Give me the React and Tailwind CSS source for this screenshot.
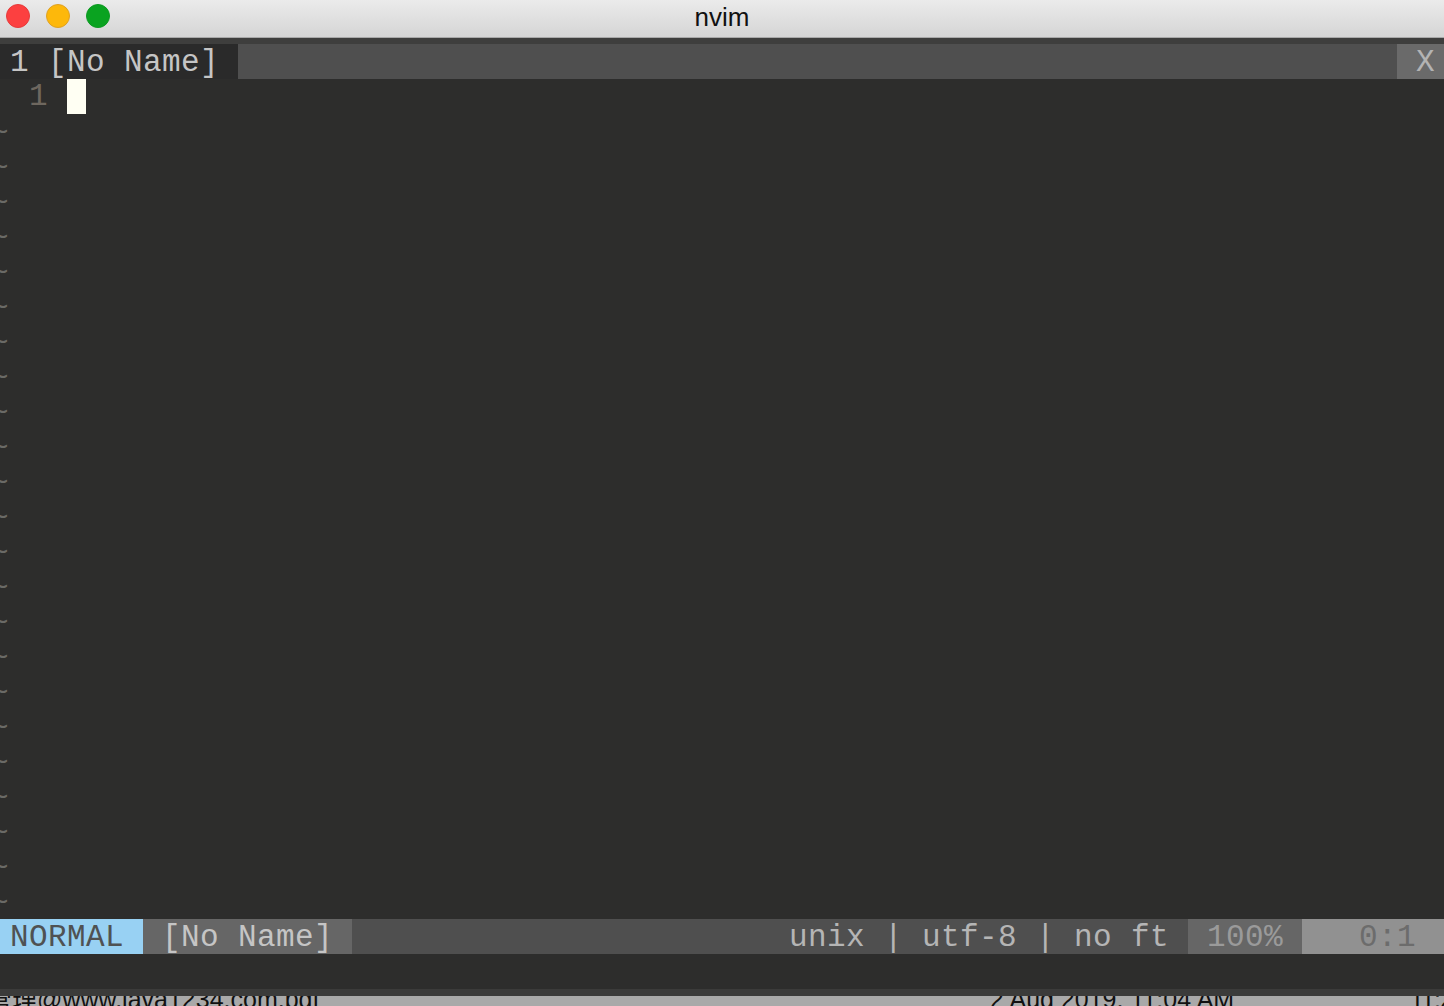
const font = "font-['Liberation_Mono','DejaVu_Sans_Mono',monospace] text-[31px] tracking-[0.4px] font-light whitespace-pre";
const mono = `${font} leading-[35px]`;
const barMono = `${font} leading-[37px]`;

export default function App() {
  const tildes = Array.from({ length: 23 });
  return (
    <div className="w-[1444px] h-[1006px] overflow-hidden flex flex-col bg-[#2d2d2c]">
      <div className="relative h-[37px] shrink-0 flex items-center justify-center pb-1 bg-gradient-to-b from-[#ebebeb] to-[#d5d5d5]">
        <div className="absolute left-[6px] top-[4px] flex gap-[16px]">
          <span className="w-[24px] h-[24px] rounded-full bg-[#fc4040] border border-[#e63b3b]" />
          <span className="w-[24px] h-[24px] rounded-full bg-[#fdb80b] border border-[#dfa123]" />
          <span className="w-[24px] h-[24px] rounded-full bg-[#0aa320] border border-[#0d9a22]" />
        </div>
        <span className="font-['Liberation_Sans',Arial,sans-serif] text-[26px] leading-[30px] text-[#111]">nvim</span>
      </div>
      <div className="h-px shrink-0 bg-[#a9a9a9]" />
      <div className="h-[6px] shrink-0 bg-[#3e3e3d]" />

      <div className={`flex h-[35px] shrink-0 bg-[#4f4f4f] text-[#c5c5c5] ${barMono}`}>
        <div className="w-[238px] pl-[10px] bg-[#2a2a2a]">1 [No Name]</div>
        <div className="ml-auto w-[47px] bg-[#6a6a6a] pl-[19px] text-[#b3b3b3]">X</div>
      </div>

      <div className={`flex h-[35px] shrink-0 ${mono}`}>
        <div className="w-[67px] pl-[29px] text-[#6e675f]">1</div>
        <div className="w-[19px] h-[35px] bg-[#fffff3]" />
      </div>

      <div className="flex flex-col shrink-0">
        {tildes.map((_, i) => (
          <div key={i} className={`h-[35px] shrink-0 overflow-hidden text-[#6a6a66] ${mono}`}>
            <span className="block -ml-[10px] pt-[2px]">~</span>
          </div>
        ))}
      </div>

      <div className={`flex h-[35px] shrink-0 bg-[#4f4f4f] text-[#b5b5b5] ${barMono}`}>
        <div className="w-[143px] shrink-0 pl-[10px] bg-[#98d1f3] text-[#4f5253]">NORMAL</div>
        <div className="w-[209px] shrink-0 pl-[19px] bg-[#666666] text-[#c5c5c5]">[No Name]</div>
        <div className="ml-auto pr-[19px]">unix | utf-8 | no ft</div>
        <div className="w-[114px] shrink-0 pl-[19px] bg-[#666666] text-[#9a9a9a]">100%</div>
        <div className="w-[142px] shrink-0 pl-[57px] bg-[#919191] text-[#6c6c6c]">0:1</div>
      </div>

      <div className="h-[35px] shrink-0 bg-[#2d2d2c]" />
      <div className="h-[7px] shrink-0 bg-[#3b3b3a]" />
      <div className="flex-1 min-h-0 overflow-hidden bg-[#a9a9a9] font-['Liberation_Sans',Arial,'Noto_Sans_CJK_SC',sans-serif] text-[25px] leading-[25px] text-[#111] whitespace-pre">
        <div className="flex -mt-[9px]">
          <span className="-ml-[13px] w-[1003px] shrink-0">管理@www.java1234.com.pgf</span>
          <span className="w-[420px] shrink-0">2 Aug 2019, 11:04 AM</span>
          <span className="shrink-0 tracking-[-1px]">11:2</span>
        </div>
      </div>
    </div>
  );
}
